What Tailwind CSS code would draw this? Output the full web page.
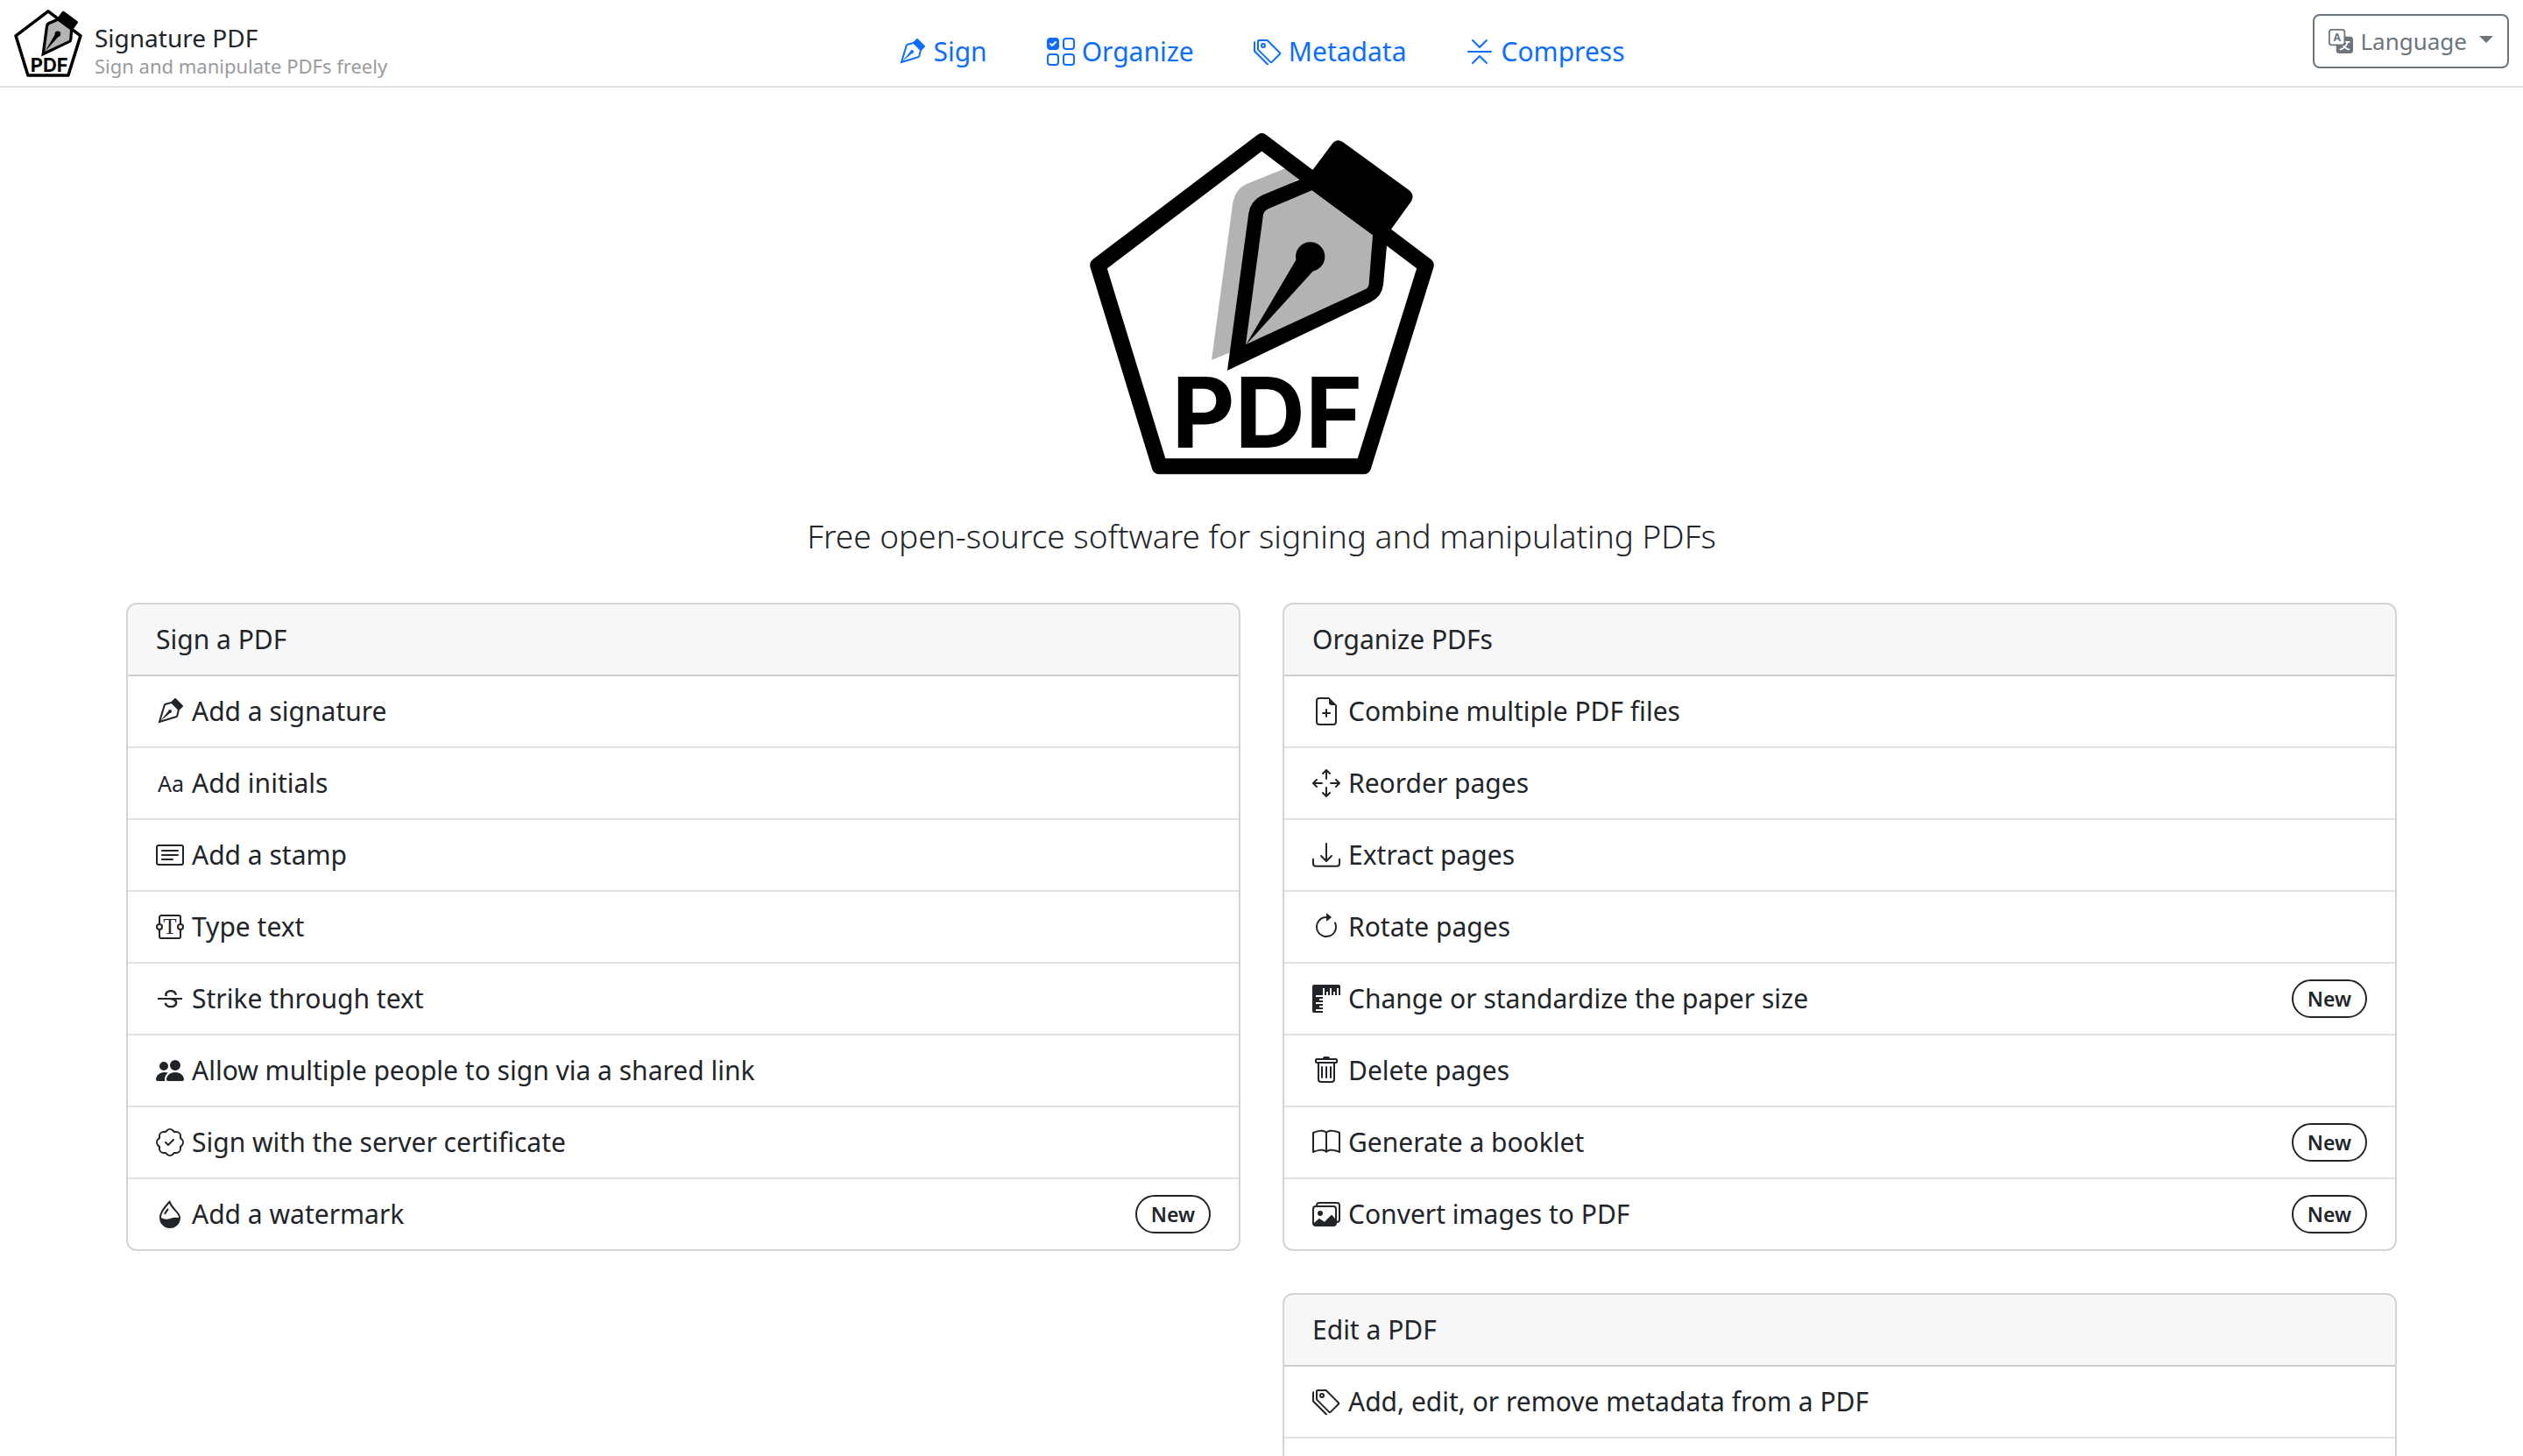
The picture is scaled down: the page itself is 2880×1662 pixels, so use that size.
<!DOCTYPE html>
<html lang="en">
<head>
<meta charset="utf-8">
<title>Signature PDF</title>
<script src="https://cdn.jsdelivr.net/npm/@tailwindcss/browser@4"></script>
</head>
<body class="h-screen overflow-hidden bg-white font-['Noto_Sans',sans-serif] text-[30px] leading-12 text-[#212529]">

<!-- Shared symbols -->
<svg class="hidden" aria-hidden="true">
  <symbol id="pen" viewBox="0 0 16 16"><path fill-rule="evenodd" d="M10.646.646a.5.5 0 0 1 .708 0l4 4a.5.5 0 0 1 0 .708l-1.902 1.902-.829 3.313a1.5 1.5 0 0 1-1.024 1.073L1.254 14.746 4.358 4.4A1.5 1.5 0 0 1 5.43 3.377l3.313-.828zm-1.8 2.908-3.173.793a.5.5 0 0 0-.358.342l-2.57 8.565 8.567-2.57a.5.5 0 0 0 .34-.357l.794-3.174-3.6-3.6z"/><path fill-rule="evenodd" d="M2.832 13.228 8 9a1 1 0 1 0-1-1l-4.228 5.168-.026.086z"/></symbol>
  <symbol id="tags" viewBox="0 0 16 16"><path d="M3 2v4.586l7 7L14.586 9l-7-7zM2 2a1 1 0 0 1 1-1h4.586a1 1 0 0 1 .707.293l7 7a1 1 0 0 1 0 1.414l-4.586 4.586a1 1 0 0 1-1.414 0l-7-7A1 1 0 0 1 2 6.586z"/><path d="M5.5 5a.5.5 0 1 1 0-1 .5.5 0 0 1 0 1m0 1a1.5 1.5 0 1 0 0-3 1.5 1.5 0 0 0 0 3M1 7.086a1 1 0 0 0 .293.707L8.75 15.25l-.043.043a1 1 0 0 1-1.414 0l-7-7A1 1 0 0 1 0 7.586V3a1 1 0 0 1 1-1z"/></symbol>
  <symbol id="logo" viewBox="69 66 1179 1170">
    <path d="M658 94 1220 519 1006 1207H308L97 519Z" fill="none" stroke="#000" stroke-width="54" stroke-linejoin="round"/>
    <path d="M834 190 900 101Q915 84 935 96L1163 262Q1182 278 1170 299L1101 395 1086 452 1038 415 830 262 786 226Z"/>
    <path d="M830 262 660 325 600 795 1030 600 1038 415Z" fill="#b3b3b3"/>
    <path fill-rule="evenodd" d="M840 205 786 226 660 278Q620 296 613 340L540 879 1030 645Q1070 625 1074 585L1086 452 1060 380ZM830 262 684 323Q665 332 663 345L603 790 1012 601Q1024 595 1025 582L1038 415Z"/>
    <path d="M603 792 775 500 824 489 834 538Z"/><circle cx="824" cy="489" r="50"/>
    <text x="676" y="1143" text-anchor="middle" font-family="Inter, sans-serif" font-weight="700" font-size="334">PDF</text>
  </symbol>
</svg>

<header class="grid grid-cols-[1fr_auto_1fr] items-start border-b-2 border-[#dee2e6] h-25">
  <a href="#" class="flex items-end gap-3.5 pl-4 pt-[11px]">
    <svg class="h-[77px] w-[78px] shrink-0" aria-label="Signature PDF logo"><use href="#logo"/></svg>
    <span class="flex flex-col">
      <span class="text-[28px] leading-[38px]">Signature PDF</span>
      <span class="text-[22px] leading-[26px] text-[#999b9d]">Sign and manipulate PDFs freely</span>
    </span>
  </a>
  <nav class="flex gap-[68px] pt-[35px] text-[#0d6efd]">
    <a href="#" class="flex items-center gap-2"><svg class="size-8 fill-current"><use href="#pen"/></svg>Sign</a>
    <a href="#" class="flex items-center gap-2"><svg class="size-8 fill-current" viewBox="0 0 16 16"><path d="M2 10h3a1 1 0 0 1 1 1v3a1 1 0 0 1-1 1H2a1 1 0 0 1-1-1v-3a1 1 0 0 1 1-1m9-9h3a1 1 0 0 1 1 1v3a1 1 0 0 1-1 1h-3a1 1 0 0 1-1-1V2a1 1 0 0 1 1-1m0 9a1 1 0 0 0-1 1v3a1 1 0 0 0 1 1h3a1 1 0 0 0 1-1v-3a1 1 0 0 0-1-1zm0-10a2 2 0 0 0-2 2v3a2 2 0 0 0 2 2h3a2 2 0 0 0 2-2V2a2 2 0 0 0-2-2zM2 9a2 2 0 0 0-2 2v3a2 2 0 0 0 2 2h3a2 2 0 0 0 2-2v-3a2 2 0 0 0-2-2zm7 2a2 2 0 0 1 2-2h3a2 2 0 0 1 2 2v3a2 2 0 0 1-2 2h-3a2 2 0 0 1-2-2zM0 2a2 2 0 0 1 2-2h3a2 2 0 0 1 2 2v3a2 2 0 0 1-2 2H2a2 2 0 0 1-2-2zm5.354.854a.5.5 0 1 0-.708-.708L3 3.793l-.646-.647a.5.5 0 1 0-.708.708l1 1a.5.5 0 0 0 .708 0z"/></svg>Organize</a>
    <a href="#" class="flex items-center gap-2"><svg class="size-8 fill-current"><use href="#tags"/></svg>Metadata</a>
    <a href="#" class="flex items-center gap-2"><svg class="size-8 fill-current" viewBox="0 0 16 16"><path fill-rule="evenodd" d="M3.646 14.854a.5.5 0 0 0 .708 0L8 11.207l3.646 3.647a.5.5 0 0 0 .708-.708l-4-4a.5.5 0 0 0-.708 0l-4 4a.5.5 0 0 0 0 .708m0-13.708a.5.5 0 0 1 .708 0L8 4.793l3.646-3.647a.5.5 0 0 1 .708.708l-4 4a.5.5 0 0 1-.708 0l-4-4a.5.5 0 0 1 0-.708M1 8a.5.5 0 0 1 .5-.5h13a.5.5 0 0 1 0 1h-13A.5.5 0 0 1 1 8"/></svg>Compress</a>
  </nav>
  <button type="button" class="mr-4 mt-4 flex items-center justify-self-end rounded-lg border-2 border-[#6c757d] px-4 py-2 text-[26px] leading-[42px] text-[#6c757d]">
    <svg class="mr-2 size-7 fill-current" viewBox="0 0 16 16"><text x="5.5" y="8" text-anchor="middle" font-size="7" font-weight="700">A</text><path d="M0 2a2 2 0 0 1 2-2h7a2 2 0 0 1 2 2v3h3a2 2 0 0 1 2 2v7a2 2 0 0 1-2 2H7a2 2 0 0 1-2-2v-3H2a2 2 0 0 1-2-2zm2-1a1 1 0 0 0-1 1v7a1 1 0 0 0 1 1h7a1 1 0 0 0 1-1V2a1 1 0 0 0-1-1zm7.138 9.995q.289.451.63.846c-.748.575-1.673 1.001-2.768 1.292.178.217.451.635.555.867 1.125-.359 2.08-.844 2.886-1.494.777.665 1.739 1.165 2.93 1.472.133-.254.414-.673.629-.89-1.125-.253-2.057-.694-2.82-1.284.681-.747 1.222-1.651 1.621-2.757H14V8h-3v1.047h.765c-.318.844-.74 1.546-1.272 2.13a6 6 0 0 1-.415-.492 2 2 0 0 1-.94.31"/></svg>
    Language
    <svg class="mb-1 ml-3.5 h-2 w-4 fill-current" viewBox="0 0 16 8"><path d="M0 0H16L8 8Z"/></svg>
  </button>
</header>

<main class="mx-auto max-w-[2640px] px-6">
  <div class="flex flex-col items-center pt-13">
    <svg class="h-[390px] w-[393px]" viewBox="69 66 1179 1170" aria-label="Signature PDF">
      <path d="M486 843 558 310Q566 258 606 240L738 187 790 220 660 290 550 817Z" fill="#b3b3b3"/>
      <use href="#logo" x="69" y="66" width="1179" height="1170"/>
    </svg>
    <p class="mt-10 text-[37px] leading-15 font-light">Free open-source software for signing and manipulating PDFs</p>
  </div>

  <div class="mt-[46px] grid grid-cols-2 items-start gap-12">
    <section class="overflow-hidden rounded-xl border-2 border-black/17">
      <h2 class="border-b-2 border-black/17 bg-black/3 px-8 py-4">Sign a PDF</h2>
      <ul class="divide-y-2 divide-[#dee2e6] *:flex *:items-center *:gap-[9px] *:px-8 *:py-4">
        <li><svg class="size-8 fill-current"><use href="#pen"/></svg>Add a signature</li>
        <li><svg class="size-8 fill-current" viewBox="0 0 16 16"><text x="1" y="13" font-size="12.5">Aa</text></svg>Add initials</li>
        <li><svg class="size-8 fill-current" viewBox="0 0 16 16"><path d="M14.5 3a.5.5 0 0 1 .5.5v9a.5.5 0 0 1-.5.5h-13a.5.5 0 0 1-.5-.5v-9a.5.5 0 0 1 .5-.5zm-13-1A1.5 1.5 0 0 0 0 3.5v9A1.5 1.5 0 0 0 1.5 14h13a1.5 1.5 0 0 0 1.5-1.5v-9A1.5 1.5 0 0 0 14.5 2z"/><path d="M3 5.5a.5.5 0 0 1 .5-.5h9a.5.5 0 0 1 0 1h-9a.5.5 0 0 1-.5-.5M3 8a.5.5 0 0 1 .5-.5h9a.5.5 0 0 1 0 1h-9A.5.5 0 0 1 3 8m0 2.5a.5.5 0 0 1 .5-.5h6a.5.5 0 0 1 0 1h-6a.5.5 0 0 1-.5-.5"/></svg>Add a stamp</li>
        <li><svg class="size-8 fill-current" viewBox="0 0 16 16"><g fill="none" stroke="currentColor"><path d="M2 6.5V2.5a1 1 0 0 1 1-1h10a1 1 0 0 1 1 1V6.5M2 9.5v4a1 1 0 0 0 1 1h10a1 1 0 0 0 1-1V9.5"/><circle cx="2" cy="8" r="1.5"/><circle cx="14" cy="8" r="1.5"/></g><text x="8" y="12" text-anchor="middle" font-size="12.5" font-family="Liberation Serif, serif">T</text></svg>Type text</li>
        <li><svg class="size-8 fill-current" viewBox="0 0 16 16"><path d="M6.333 5.686c0 .31.083.581.27.814H5.166a2.8 2.8 0 0 1-.099-.76c0-1.627 1.436-2.768 3.48-2.768 1.969 0 3.39 1.175 3.445 2.85h-1.23c-.11-1.08-.964-1.743-2.25-1.743-1.23 0-2.18.602-2.18 1.607zm2.194 7.478c-2.153 0-3.589-1.107-3.705-2.81h1.23c.144 1.06 1.129 1.703 2.544 1.703 1.34 0 2.31-.705 2.31-1.675 0-.827-.547-1.374-1.914-1.675L8.046 8.5H1v-1h14v1h-3.504c.468.437.675.994.675 1.697 0 1.826-1.436 2.967-3.644 2.967"/></svg>Strike through text</li>
        <li><svg class="size-8 fill-current" viewBox="0 0 16 16"><path d="M7 14s-1 0-1-1 1-4 5-4 5 3 5 4-1 1-1 1zm4-6a3 3 0 1 0 0-6 3 3 0 0 0 0 6m-5.784 6A2.24 2.24 0 0 1 5 13c0-1.355.68-2.75 1.936-3.72A6.3 6.3 0 0 0 5 9c-4 0-5 3-5 4s1 1 1 1zM4.5 8a2.5 2.5 0 1 0 0-5 2.5 2.5 0 0 0 0 5"/></svg>Allow multiple people to sign via a shared link</li>
        <li><svg class="size-8 fill-current" viewBox="0 0 16 16"><path fill-rule="evenodd" d="M10.354 6.146a.5.5 0 0 1 0 .708l-3 3a.5.5 0 0 1-.708 0l-1.5-1.5a.5.5 0 1 1 .708-.708L7 8.793l2.646-2.647a.5.5 0 0 1 .708 0"/><path d="m10.273 2.513-.921-.944.715-.698.622.637.89-.011a2.89 2.89 0 0 1 2.924 2.924l-.01.89.636.622a2.89 2.89 0 0 1 0 4.134l-.637.622.011.89a2.89 2.89 0 0 1-2.924 2.924l-.89-.01-.622.636a2.89 2.89 0 0 1-4.134 0l-.622-.637-.89.011a2.89 2.89 0 0 1-2.924-2.924l.01-.89-.636-.622a2.89 2.89 0 0 1 0-4.134l.637-.622-.011-.89a2.89 2.89 0 0 1 2.924-2.924l.89.01.622-.636a2.89 2.89 0 0 1 4.134 0l-.715.698a1.89 1.89 0 0 0-2.704 0l-.92.944-1.32-.016a1.89 1.89 0 0 0-1.911 1.912l.016 1.318-.944.921a1.89 1.89 0 0 0 0 2.704l.944.92-.016 1.32a1.89 1.89 0 0 0 1.912 1.911l1.318-.016.921.944a1.89 1.89 0 0 0 2.704 0l.92-.944 1.32.016a1.89 1.89 0 0 0 1.911-1.912l-.016-1.318.944-.921a1.89 1.89 0 0 0 0-2.704l-.944-.92.016-1.32a1.89 1.89 0 0 0-1.912-1.911z"/></svg>Sign with the server certificate</li>
        <li><svg class="size-8 fill-current" viewBox="0 0 16 16"><path fill-rule="evenodd" d="M7.21.8C7.69.295 8 0 8 0q.164.544.371 1.038c.812 1.946 2.073 3.35 3.197 4.6C12.878 7.096 14 8.345 14 10a6 6 0 0 1-12 0C2 6.668 5.58 2.517 7.21.8m.413 1.021A31 31 0 0 0 5.794 3.99c-.726.95-1.436 2.008-1.96 3.07C3.304 8.133 3 9.138 3 10c0 0 2.5 1.5 5 .5s5-.5 5-.5c0-1.201-.796-2.157-2.181-3.7l-.03-.032C9.75 5.11 8.5 3.72 7.623 1.82z"/><path fill-rule="evenodd" d="M4.553 7.776c.82-1.641 1.717-2.753 2.093-3.13l.708.708c-.29.29-1.128 1.311-1.907 2.87z"/></svg>Add a watermark<span class="ml-auto rounded-full border-2 border-[#212529] px-4 text-[23px] leading-10 font-semibold">New</span></li>
      </ul>
    </section>

    <div class="flex flex-col gap-12">
      <section class="overflow-hidden rounded-xl border-2 border-black/17">
        <h2 class="border-b-2 border-black/17 bg-black/3 px-8 py-4">Organize PDFs</h2>
        <ul class="divide-y-2 divide-[#dee2e6] *:flex *:items-center *:gap-[9px] *:px-8 *:py-4">
          <li><svg class="size-8 fill-current" viewBox="0 0 16 16"><path d="M8 6.5a.5.5 0 0 1 .5.5v1.5H10a.5.5 0 0 1 0 1H8.5V11a.5.5 0 0 1-1 0V9.5H6a.5.5 0 0 1 0-1h1.5V7a.5.5 0 0 1 .5-.5"/><path d="M14 4.5V14a2 2 0 0 1-2 2H4a2 2 0 0 1-2-2V2a2 2 0 0 1 2-2h5.5zm-3 0A1.5 1.5 0 0 1 9.5 3V1H4a1 1 0 0 0-1 1v12a1 1 0 0 0 1 1h8a1 1 0 0 0 1-1V4.5z"/></svg>Combine multiple PDF files</li>
          <li><svg class="size-8 fill-current" viewBox="0 0 16 16"><path fill-rule="evenodd" d="M7.646.146a.5.5 0 0 1 .708 0l2 2a.5.5 0 0 1-.708.708L8.5 1.707V5.5a.5.5 0 0 1-1 0V1.707L6.354 2.854a.5.5 0 1 1-.708-.708zM8 10a.5.5 0 0 1 .5.5v3.793l1.146-1.147a.5.5 0 0 1 .708.708l-2 2a.5.5 0 0 1-.708 0l-2-2a.5.5 0 0 1 .708-.708L7.5 14.293V10.5A.5.5 0 0 1 8 10M.146 8.354a.5.5 0 0 1 0-.708l2-2a.5.5 0 1 1 .708.708L1.707 7.5H5.5a.5.5 0 0 1 0 1H1.707l1.147 1.146a.5.5 0 0 1-.708.708zM10 8a.5.5 0 0 1 .5-.5h3.793l-1.147-1.146a.5.5 0 0 1 .708-.708l2 2a.5.5 0 0 1 0 .708l-2 2a.5.5 0 0 1-.708-.708L14.293 8.5H10.5A.5.5 0 0 1 10 8"/></svg>Reorder pages</li>
          <li><svg class="size-8 fill-current" viewBox="0 0 16 16"><path d="M.5 9.9a.5.5 0 0 1 .5.5v2.5a1 1 0 0 0 1 1h12a1 1 0 0 0 1-1v-2.5a.5.5 0 0 1 1 0v2.5a2 2 0 0 1-2 2H2a2 2 0 0 1-2-2v-2.5a.5.5 0 0 1 .5-.5"/><path d="M7.646 11.854a.5.5 0 0 0 .708 0l3-3a.5.5 0 0 0-.708-.708L8.5 10.293V1.5a.5.5 0 0 0-1 0v8.793L5.354 8.146a.5.5 0 1 0-.708.708z"/></svg>Extract pages</li>
          <li><svg class="size-8 fill-current" viewBox="0 0 16 16"><path fill-rule="evenodd" d="M8 3a5 5 0 1 0 4.546 2.914.5.5 0 0 1 .908-.417A6 6 0 1 1 8 2z"/><path d="M8 4.466V.534a.25.25 0 0 1 .41-.192l2.36 1.966c.12.1.12.284 0 .384L8.41 4.658A.25.25 0 0 1 8 4.466"/></svg>Rotate pages</li>
          <li><svg class="size-8 fill-current" viewBox="0 0 16 16"><path d="M1 0a1 1 0 0 0-1 1v14a1 1 0 0 0 1 1h5v-1H2v-1h4v-1H4v-1h2v-1H2v-1h4V9H4V8h2V7H2V6h4V2h1v4h1V4h1v2h1V2h1v4h1V4h1v2h1V2h1v4h1V1a1 1 0 0 0-1-1z"/></svg>Change or standardize the paper size<span class="ml-auto rounded-full border-2 border-[#212529] px-4 text-[23px] leading-10 font-semibold">New</span></li>
          <li><svg class="size-8 fill-current" viewBox="0 0 16 16"><path d="M5.5 5.5A.5.5 0 0 1 6 6v6a.5.5 0 0 1-1 0V6a.5.5 0 0 1 .5-.5m2.5 0a.5.5 0 0 1 .5.5v6a.5.5 0 0 1-1 0V6a.5.5 0 0 1 .5-.5m3 .5a.5.5 0 0 0-1 0v6a.5.5 0 0 0 1 0z"/><path d="M14.5 3a1 1 0 0 1-1 1H13v9a2 2 0 0 1-2 2H5a2 2 0 0 1-2-2V4h-.5a1 1 0 0 1-1-1V2a1 1 0 0 1 1-1H6a1 1 0 0 1 1-1h2a1 1 0 0 1 1 1h3.5a1 1 0 0 1 1 1zM4.118 4 4 4.059V13a1 1 0 0 0 1 1h6a1 1 0 0 0 1-1V4.059L11.882 4zM2.5 3h11V2h-11z"/></svg>Delete pages</li>
          <li><svg class="size-8 fill-current" viewBox="0 0 16 16"><path d="M1 2.828c.885-.37 2.154-.769 3.388-.893 1.33-.134 2.458.063 3.112.752v9.746c-.935-.53-2.12-.603-3.213-.493-1.18.12-2.37.461-3.287.811zm7.5-.141c.654-.689 1.782-.886 3.112-.752 1.234.124 2.503.523 3.388.893v9.923c-.918-.35-2.107-.692-3.287-.81-1.094-.111-2.278-.039-3.213.492zM8 1.783C7.015.936 5.587.81 4.287.94c-1.514.153-3.042.672-3.994 1.105A.5.5 0 0 0 0 2.5v11a.5.5 0 0 0 .707.455c.882-.4 2.303-.881 3.68-1.02 1.409-.142 2.59.087 3.223.877a.5.5 0 0 0 .78 0c.633-.79 1.814-1.019 3.222-.877 1.378.139 2.8.62 3.681 1.02A.5.5 0 0 0 16 13.5v-11a.5.5 0 0 0-.293-.455c-.952-.433-2.48-.952-3.994-1.105C10.413.809 8.985.936 8 1.783"/></svg>Generate a booklet<span class="ml-auto rounded-full border-2 border-[#212529] px-4 text-[23px] leading-10 font-semibold">New</span></li>
          <li><svg class="size-8 fill-current" viewBox="0 0 16 16"><path d="M4.502 9a1.5 1.5 0 1 0 0-3 1.5 1.5 0 0 0 0 3"/><path d="M14.002 13a2 2 0 0 1-2 2h-10a2 2 0 0 1-2-2V5A2 2 0 0 1 2 3a2 2 0 0 1 2-2h10a2 2 0 0 1 2 2v8a2 2 0 0 1-1.998 2M14 2H4a1 1 0 0 0-1 1h9.002a2 2 0 0 1 2 2v7A1 1 0 0 0 15 11V3a1 1 0 0 0-1-1M2.002 4a1 1 0 0 0-1 1v8l2.646-2.354a.5.5 0 0 1 .63-.062l2.66 1.773 3.71-3.71a.5.5 0 0 1 .577-.094l1.777 1.947V5a1 1 0 0 0-1-1z"/></svg>Convert images to PDF<span class="ml-auto rounded-full border-2 border-[#212529] px-4 text-[23px] leading-10 font-semibold">New</span></li>
        </ul>
      </section>
      <section class="overflow-hidden rounded-xl border-2 border-black/17">
        <h2 class="border-b-2 border-black/17 bg-black/3 px-8 py-4">Edit a PDF</h2>
        <ul class="divide-y-2 divide-[#dee2e6] *:flex *:items-center *:gap-[9px] *:px-8 *:py-4">
          <li><svg class="size-8 fill-current"><use href="#tags"/></svg>Add, edit, or remove metadata from a PDF</li>
          <li class="h-20"></li>
        </ul>
      </section>
    </div>
  </div>
</main>
</body>
</html>
